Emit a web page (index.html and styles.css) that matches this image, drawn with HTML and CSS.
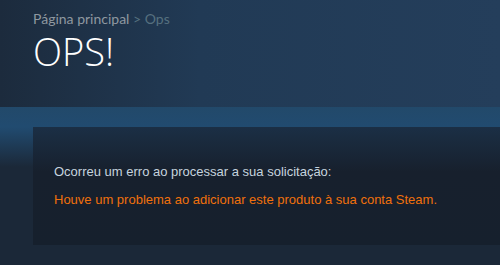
FILE: index.html
```html
<!DOCTYPE html>
<html lang="pt-BR">
<head>
<meta charset="utf-8">
<link rel="stylesheet" href="styles.css">
</head>
<body>
<div class="page">
  <header class="hero">
    <div class="breadcrumbs"><a class="crumb">Página principal</a> <span class="sep">&gt;</span> <span class="current">Ops</span></div>
    <h1 class="title">OPS!</h1>
  </header>
  <section class="content">
    <div class="error-box">
      <p class="msg">Ocorreu um erro ao processar a sua solicitação:</p>
      <p class="err">Houve um problema ao adicionar este produto à sua conta Steam.</p>
    </div>
  </section>
</div>
</body>
</html>
```
FILE: styles.css
```css
html, body {
  margin: 0;
  padding: 0;
  background: #1b2838;
}
.page {
  width: 500px;
  height: 265px;
  overflow: hidden;
  background: #1b2838;
}
.hero {
  height: 107px;
  box-sizing: border-box;
  padding: 9px 0 0 33px;
  background: linear-gradient(90deg, #1c2b3d 0%, #213a55 40%, #243e5b 100%);
}
.breadcrumbs {
  font-family: Lato, "Open Sans", sans-serif;
  font-size: 14px;
  line-height: 20px;
  color: #56707f;
}
.crumb {
  color: #8f98a0;
}
.title {
  margin: -1px 0 0 0;
  font-family: "Open Sans", "Noto Sans", sans-serif;
  font-size: 38px;
  font-weight: 300;
  line-height: 46px;
  color: #ffffff;
}
.content {
  padding: 20px 0 20px 33px;
  background: linear-gradient(180deg, #22496a 0px, #214b70 20px, #1b2838 60px, #1b2838 100%);
}
.error-box {
  height: 118px;
  box-sizing: border-box;
  padding: 36px 0 0 21px;
  background: linear-gradient(180deg, #1b2f45 0px, #17202d 45px, #16202d 100%);
  font-family: "Liberation Sans", Arial, sans-serif;
  font-size: 13px;
  line-height: 18px;
}
.msg {
  margin: 0 0 10px 0;
  color: #c6d4df;
}
.err {
  margin: 0;
  color: #f0700c;
}
```
